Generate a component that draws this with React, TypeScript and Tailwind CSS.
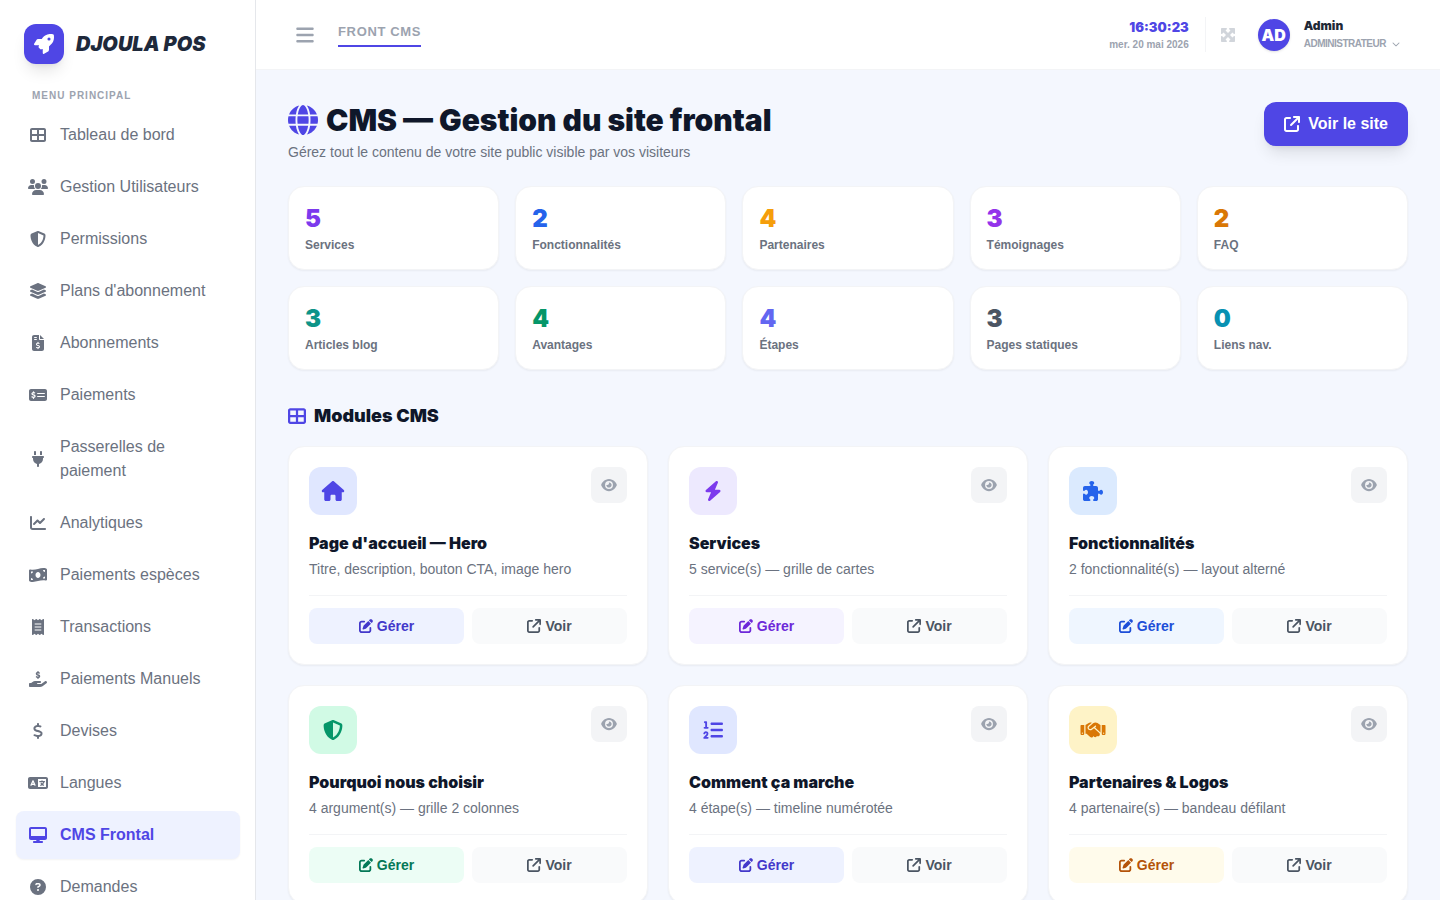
import React, { useState } from 'react';
import clsx from 'clsx';
import type { IconType } from 'react-icons';
import {
  FaArrowUpRightFromSquare,
  FaBars,
  FaBolt,
  FaChartLine,
  FaChevronDown,
  FaCircleQuestion,
  FaDesktop,
  FaDollarSign,
  FaEye,
  FaFileInvoiceDollar,
  FaGlobe,
  FaHandHoldingDollar,
  FaHandshake,
  FaHouse,
  FaLanguage,
  FaLayerGroup,
  FaListOl,
  FaMaximize,
  FaMoneyBillWave,
  FaMoneyCheckDollar,
  FaPenToSquare,
  FaPlug,
  FaPuzzlePiece,
  FaReceipt,
  FaRocket,
  FaShieldHalved,
  FaTableCellsLarge,
  FaUsers,
} from 'react-icons/fa6';

interface MenuItem {
  label: string;
  icon: IconType;
}

interface Stat {
  label: string;
  value: number;
  color: string;
}

interface CmsModule {
  title: string;
  description: string;
  icon: IconType;
  iconStyle: string;
  buttonStyle: string;
}

const menuItems: MenuItem[] = [
  { label: 'Tableau de bord', icon: FaTableCellsLarge },
  { label: 'Gestion Utilisateurs', icon: FaUsers },
  { label: 'Permissions', icon: FaShieldHalved },
  { label: "Plans d'abonnement", icon: FaLayerGroup },
  { label: 'Abonnements', icon: FaFileInvoiceDollar },
  { label: 'Paiements', icon: FaMoneyCheckDollar },
  { label: 'Passerelles de paiement', icon: FaPlug },
  { label: 'Analytiques', icon: FaChartLine },
  { label: 'Paiements espèces', icon: FaMoneyBillWave },
  { label: 'Transactions', icon: FaReceipt },
  { label: 'Paiements Manuels', icon: FaHandHoldingDollar },
  { label: 'Devises', icon: FaDollarSign },
  { label: 'Langues', icon: FaLanguage },
  { label: 'CMS Frontal', icon: FaDesktop },
  { label: 'Demandes', icon: FaCircleQuestion },
];

const stats: Stat[] = [
  { label: 'Services', value: 5, color: 'text-[#7c3aed]' },
  { label: 'Fonctionnalités', value: 2, color: 'text-[#2563eb]' },
  { label: 'Partenaires', value: 4, color: 'text-[#f59e0b]' },
  { label: 'Témoignages', value: 3, color: 'text-[#9333ea]' },
  { label: 'FAQ', value: 2, color: 'text-[#d97706]' },
  { label: 'Articles blog', value: 3, color: 'text-[#0d9488]' },
  { label: 'Avantages', value: 4, color: 'text-[#059669]' },
  { label: 'Étapes', value: 4, color: 'text-[#6366f1]' },
  { label: 'Pages statiques', value: 3, color: 'text-[#4b5563]' },
  { label: 'Liens nav.', value: 0, color: 'text-[#0891b2]' },
];

const modules: CmsModule[] = [
  {
    title: "Page d'accueil — Hero",
    description: 'Titre, description, bouton CTA, image hero',
    icon: FaHouse,
    iconStyle: 'bg-[#e0e7ff] text-[#4f46e5]',
    buttonStyle: 'bg-[#eef2ff] text-[#4338ca]',
  },
  {
    title: 'Services',
    description: '5 service(s) — grille de cartes',
    icon: FaBolt,
    iconStyle: 'bg-[#ede9fe] text-[#7c3aed]',
    buttonStyle: 'bg-[#f5f3ff] text-[#6d28d9]',
  },
  {
    title: 'Fonctionnalités',
    description: '2 fonctionnalité(s) — layout alterné',
    icon: FaPuzzlePiece,
    iconStyle: 'bg-[#dbeafe] text-[#2563eb]',
    buttonStyle: 'bg-[#eff6ff] text-[#1d4ed8]',
  },
  {
    title: 'Pourquoi nous choisir',
    description: '4 argument(s) — grille 2 colonnes',
    icon: FaShieldHalved,
    iconStyle: 'bg-[#d1fae5] text-[#059669]',
    buttonStyle: 'bg-[#ecfdf5] text-[#047857]',
  },
  {
    title: 'Comment ça marche',
    description: '4 étape(s) — timeline numérotée',
    icon: FaListOl,
    iconStyle: 'bg-[#e0e7ff] text-[#4f46e5]',
    buttonStyle: 'bg-[#eef2ff] text-[#4338ca]',
  },
  {
    title: 'Partenaires & Logos',
    description: '4 partenaire(s) — bandeau défilant',
    icon: FaHandshake,
    iconStyle: 'bg-[#fef3c7] text-[#d97706]',
    buttonStyle: 'bg-[#fffbeb] text-[#b45309]',
  },
];

const Sidebar = () => {
  const [active, setActive] = useState('CMS Frontal');

  return (
    <aside className="w-64 shrink-0 overflow-y-auto border-r border-[#e5e7eb] bg-white [scrollbar-width:none]">
      <div className="flex items-center gap-3 p-6">
        <div className="flex h-10 w-10 items-center justify-center rounded-xl bg-[#4f46e5] text-white shadow-lg">
          <FaRocket className="h-5 w-5" />
        </div>
        <span className="font-['Inter',sans-serif] text-xl font-black whitespace-nowrap text-[#1e293b] italic">
          DJOULA POS
        </span>
      </div>

      <nav className="pr-[15px] pb-4 pl-4">
        <p className="mb-2 px-4 text-[10px] leading-[15px] font-bold tracking-widest text-[#9ca3af] uppercase">
          Menu principal
        </p>
        <ul className="space-y-1">
          {menuItems.map(({ label, icon: Icon }) => (
            <li key={label}>
              <a
                href="#"
                onClick={() => setActive(label)}
                className={clsx(
                  'flex items-center gap-3 rounded-lg p-3',
                  active === label
                    ? 'bg-[#eef2ff] font-bold text-[#4f46e5] shadow-xs'
                    : 'text-[#6b7280] hover:bg-[#f9fafb]'
                )}
              >
                <Icon className="h-4 w-5 shrink-0" />
                <span>{label}</span>
              </a>
            </li>
          ))}
        </ul>
      </nav>
    </aside>
  );
};

const Topbar = () => (
  <header className="flex min-h-[70px] shrink-0 items-center justify-between border-b border-[#f3f4f6] bg-white px-8 py-3">
    <div className="flex items-center gap-4">
      <button type="button" aria-label="Menu" className="p-2 text-[#9ca3af]">
        <FaBars className="h-5 w-[18px]" />
      </button>
      <a
        href="#"
        className="border-b-2 border-[#4f46e5] pb-1 text-[13px] leading-[18px] font-bold tracking-wider text-[#9ca3af] uppercase"
      >
        Front CMS
      </a>
    </div>

    <div className="flex items-center gap-3.5">
      <div className="border-r border-[#f3f4f6] pr-4 text-right">
        <div className="font-['Inter',sans-serif] text-[13px] leading-5 font-black text-[#4f46e5]">
          16:30:23
        </div>
        <div className="text-[10px] leading-[15px] font-bold text-[#9ca3af]">mer. 20 mai 2026</div>
      </div>
      <button type="button" aria-label="Plein écran" className="text-[#d1d5db]">
        <FaMaximize className="h-[18px] w-4" />
      </button>
      <button type="button" className="flex items-center gap-3.5 px-2 text-left">
        <span className="flex h-8 w-8 items-center justify-center rounded-full bg-[#4f46e5] font-['Inter',sans-serif] font-black text-white shadow-sm">
          AD
        </span>
        <span>
          <span className="mb-0.5 block font-['Inter',sans-serif] text-xs font-black text-[#1f2937]">
            Admin
          </span>
          <span className="flex items-center gap-1.5 text-[10px] leading-[15px] font-bold tracking-tighter text-[#9ca3af] uppercase">
            Administrateur
            <FaChevronDown className="h-2 w-2" />
          </span>
        </span>
      </button>
    </div>
  </header>
);

const StatCard = ({ label, value, color }: Stat) => (
  <div className="rounded-2xl border border-[#f3f4f6] bg-white p-4 shadow-xs">
    <div className={clsx("font-['Inter',sans-serif] text-2xl font-black", color)}>{value}</div>
    <div className="mt-0.5 text-xs font-semibold text-[#6b7280]">{label}</div>
  </div>
);

const ModuleCard = ({ title, description, icon: Icon, iconStyle, buttonStyle }: CmsModule) => (
  <div className="rounded-2xl border border-[#f3f4f6] bg-white p-5 shadow-xs">
    <div className="mb-4 flex items-start justify-between">
      <div className={clsx('flex h-12 w-12 items-center justify-center rounded-xl', iconStyle)}>
        <Icon className="h-5 w-[26px]" />
      </div>
      <button
        type="button"
        aria-label={`Aperçu ${title}`}
        className="flex h-9 w-9 items-center justify-center rounded-lg bg-[#f3f4f6] text-[#9ca3af]"
      >
        <FaEye className="h-3.5 w-4" />
      </button>
    </div>
    <h3 className="font-['Inter',sans-serif] font-black text-[#0f172a]">{title}</h3>
    <p className="mt-1 text-sm text-[#6b7280]">{description}</p>
    <div className="mt-4 flex gap-2 border-t border-[#f3f4f6] pt-3">
      <a
        href="#"
        className={clsx(
          'flex flex-1 items-center justify-center gap-1 rounded-lg py-2 text-sm font-bold',
          buttonStyle
        )}
      >
        <FaPenToSquare className="h-3.5 w-3.5" />
        Gérer
      </a>
      <a
        href="#"
        className="flex flex-1 items-center justify-center gap-1 rounded-lg bg-[#f9fafb] py-2 text-sm font-bold text-[#4b5563]"
      >
        <FaArrowUpRightFromSquare className="h-3.5 w-3.5" />
        Voir
      </a>
    </div>
  </div>
);

const App = () => {
  return (
    <div className="flex h-screen overflow-hidden bg-[#f4f7fe] font-['Liberation_Sans',sans-serif]">
      <Sidebar />

      <div className="flex min-w-0 flex-1 flex-col">
        <Topbar />

        <main className="flex-1 overflow-y-auto p-8 [scrollbar-width:none]">
          {/* Page header */}
          <div className="mb-6 flex items-start justify-between">
            <div>
              <h1 className="flex items-center gap-2 font-['Inter',sans-serif] text-3xl font-black text-[#0f172a]">
                <FaGlobe className="h-[30px] w-[30px] text-[#4f46e5]" />
                CMS — Gestion du site frontal
              </h1>
              <p className="mt-1 text-sm text-[#6b7280]">
                Gérez tout le contenu de votre site public visible par vos visiteurs
              </p>
            </div>
            <a
              href="#"
              className="flex items-center gap-2 rounded-xl bg-[#4f46e5] px-5 py-2.5 font-bold text-white shadow-lg"
            >
              <FaArrowUpRightFromSquare className="h-4 w-4" />
              Voir le site
            </a>
          </div>

          {/* Stats */}
          <div className="mb-8 grid grid-cols-5 gap-4">
            {stats.map((stat) => (
              <StatCard key={stat.label} {...stat} />
            ))}
          </div>

          {/* Modules */}
          <h2 className="mb-4 flex items-center gap-2 font-['Inter',sans-serif] text-lg font-black text-[#0f172a]">
            <FaTableCellsLarge className="h-[18px] w-[18px] text-[#4f46e5]" />
            Modules CMS
          </h2>
          <div className="grid grid-cols-3 gap-5">
            {modules.map((module) => (
              <ModuleCard key={module.title} {...module} />
            ))}
          </div>
        </main>
      </div>
    </div>
  );
};

export default App;
